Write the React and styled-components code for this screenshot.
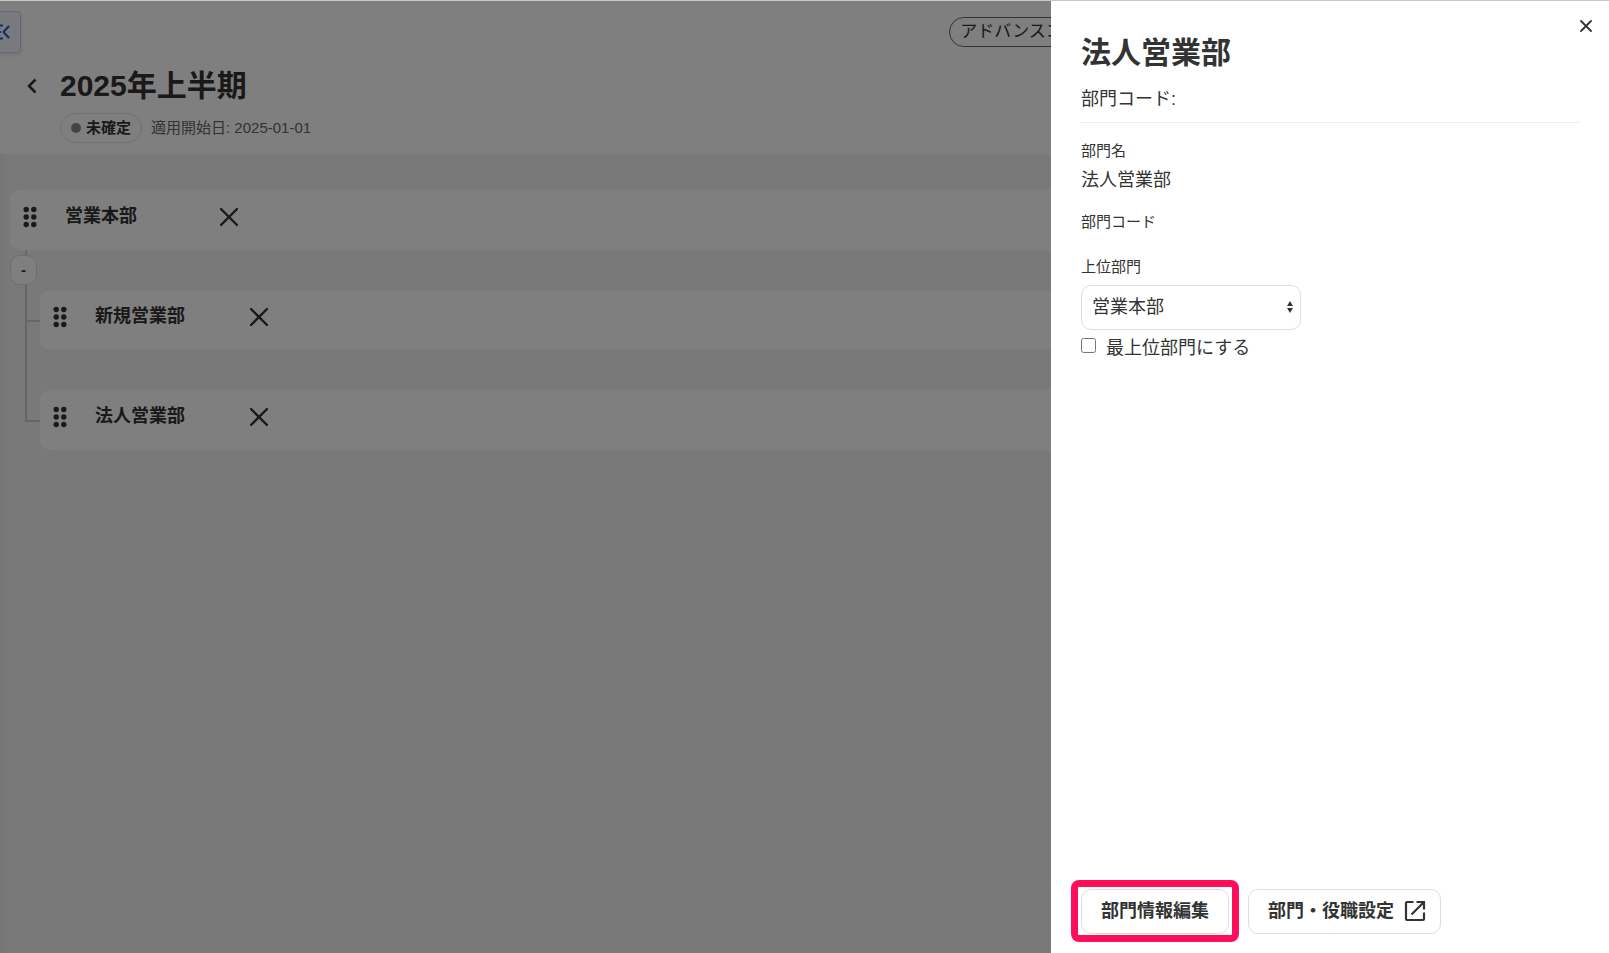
import React, { useState } from 'react';
import styled, { createGlobalStyle } from 'styled-components';

const App = () => {
  const [top, setTop] = useState(false);

  return (
    <>
      <GlobalStyle />
      <Page>
        <Header>
          <TopBar>
            <MenuTab type="button" aria-label="メニュー">
              <MenuIcon />
            </MenuTab>
            <Plan>アドバンスコース</Plan>
          </TopBar>
          <Heading>
            <BackButton type="button" aria-label="戻る">
              <BackIcon />
            </BackButton>
            <div>
              <PageTitle>2025年上半期</PageTitle>
              <Meta>
                <Status>未確定</Status>
                <span>適用開始日: 2025-01-01</span>
              </Meta>
            </div>
          </Heading>
        </Header>
        <Tree>
          <Department name="営業本部" />
          <Collapse>
            <CollapseButton type="button">-</CollapseButton>
          </Collapse>
          <Children>
            {['新規営業部', '法人営業部'].map((name, i, all) => (
              <Child key={name}>
                <Rail>
                  <Branch />
                  {i < all.length - 1 && <Trunk />}
                </Rail>
                <Department name={name} />
              </Child>
            ))}
          </Children>
        </Tree>
      </Page>
      <Overlay />
      <Drawer>
        <CloseButton type="button" aria-label="閉じる">
          <CrossIcon size={12} />
        </CloseButton>
        <DrawerTitle>法人営業部</DrawerTitle>
        <DrawerCode>部門コード:</DrawerCode>
        <Fields>
          <Label as="p">部門名</Label>
          <Value>法人営業部</Value>
          <CodeLabel as="p">部門コード</CodeLabel>
          <Label htmlFor="parent">上位部門</Label>
          <SelectBox>
            <Select id="parent" defaultValue="営業本部">
              <option>営業本部</option>
            </Select>
            <SelectArrow viewBox="0 0 6 12">
              <path d="M3 0l3 5H0zM3 12L0 7h6z" fill="#333" />
            </SelectArrow>
          </SelectBox>
          <CheckLabel>
            <Check type="checkbox" checked={top} onChange={e => setTop(e.target.checked)} />
            最上位部門にする
          </CheckLabel>
        </Fields>
        <Footer>
          <Highlight>
            <Button type="button">部門情報編集</Button>
          </Highlight>
          <LinkButton type="button">
            部門・役職設定
            <ExternalIcon />
          </LinkButton>
        </Footer>
      </Drawer>
    </>
  );
};

export default App;

const Department = ({ name }) => (
  <Card>
    <GripIcon />
    <Name>{name}</Name>
    <IconButton type="button" aria-label={`${name}を削除`}>
      <CrossIcon size={18} />
    </IconButton>
  </Card>
);

const CrossIcon = ({ size }) => (
  <svg width={size} height={size} viewBox={`0 0 ${size} ${size}`}>
    <path
      d={`M1 1L${size - 1} ${size - 1}M${size - 1} 1L1 ${size - 1}`}
      stroke="#333"
      strokeWidth={size > 14 ? 2.4 : 1.8}
      strokeLinecap="round"
    />
  </svg>
);

const GripIcon = () => (
  <svg width="14" height="22" viewBox="0 0 14 22" fill="#333">
    {[3.2, 10.8].map(x => [3.5, 11, 18.5].map(y => (
      <circle key={`${x}-${y}`} cx={x} cy={y} r="2.7" />
    )))}
  </svg>
);

const BackIcon = () => (
  <svg width="10" height="16" viewBox="0 0 10 16" fill="none">
    <path d="M8.500 1.500L2 8l6.500 6.500" stroke="#333" strokeWidth="2.500" />
  </svg>
);

const MenuIcon = () => (
  <svg width="10" height="16" viewBox="0 0 10 16" fill="none" stroke="#2456c8" strokeWidth="2">
    <path d="M0 1.500h3M0 8h1M0 14.500h3M9 2L3.500 8L9 14" />
  </svg>
);

const ExternalIcon = () => (
  <svg width="22" height="22" viewBox="0 0 22 22" fill="none" stroke="#333" strokeWidth="2.200">
    <path d="M9.500 2H3a1 1 0 0 0-1 1v16a1 1 0 0 0 1 1h16a1 1 0 0 0 1-1v-6.500M12.500 2H20v7.500M20 2L7.500 14.500" />
  </svg>
);

const GlobalStyle = createGlobalStyle`
  *, *::before, *::after {
    box-sizing: border-box;
  }
  body {
    margin: 0;
    color: #333;
    font-family: "Liberation Sans", "Noto Sans CJK JP", sans-serif;
    font-size: 18px;
    line-height: 24px;
  }
  h1, h2, p, ul {
    margin: 0;
    padding: 0;
  }
  button, select {
    color: inherit;
    font: inherit;
  }
`;

const Page = styled.main`
  display: flex;
  flex-direction: column;
  min-height: 100vh;
  border-top: 1px solid #c8c8c8;
  background: #f3f3f3;
  box-shadow: inset 8px 0 8px -6px rgba(0,0,0,0.06);
`;

const Header = styled.header`
  padding: 10px 0 11px;
  background: #fff;
`;

const TopBar = styled.div`
  display: grid;
  grid-template-columns: 59% auto;
  justify-content: start;
  align-items: center;
`;

const MenuTab = styled.button`
  display: flex;
  align-items: center;
  justify-self: start;
  width: 21px;
  height: 42px;
  padding: 0;
  border: 1px solid #c3d2ee;
  border-left: 0;
  border-radius: 0 4px 4px 0;
  background: #f1f5fd;
  box-shadow: 0 2px 4px rgba(0,0,0,0.1);
`;

const Plan = styled.span`
  height: 30px;
  padding: 0 10px;
  border: 1px solid #666;
  border-radius: 15px;
  font-size: 17px;
  line-height: 28px;
`;

const Heading = styled.div`
  display: flex;
  align-items: flex-start;
  padding: 13px 0 0 26px;
`;

const IconButton = styled.button`
  display: flex;
  align-items: center;
  justify-content: center;
  padding: 0;
  border: 0;
  background: none;
`;

const BackButton = styled(IconButton)`
  width: 12px;
  height: 40px;
  margin-right: 22px;
`;

const PageTitle = styled.h1`
  font-size: 30px;
  line-height: 40px;
`;

const Meta = styled.div`
  display: flex;
  align-items: center;
  gap: 9px;
  margin-top: 7px;
  color: #666;
  font-size: 15px;
  line-height: 28px;
`;

const Status = styled.span`
  display: flex;
  align-items: center;
  gap: 5px;
  padding: 0 10px;
  border: 1px solid #e3e3e3;
  border-radius: 15px;
  color: #333;
  font-weight: bold;
  &::before {
    content: "";
    width: 10px;
    height: 10px;
    border-radius: 50%;
    background: #888;
  }
`;

const Tree = styled.section`
  padding: 36px 0 36px 10px;
`;

const Card = styled.div`
  display: flex;
  align-items: center;
  flex: 1;
  height: 60px;
  padding: 0 13px 6px;
  border-radius: 10px 0 0 10px;
  background: #fff;
`;

const Name = styled.p`
  width: 183px;
  padding: 0 0 2px 28px;
  font-weight: bold;
`;

const Collapse = styled.div`
  height: 40px;
  padding: 5px 0;
  background: linear-gradient(#ccc, #ccc) 15px 0 / 2px 100% no-repeat;
`;

const CollapseButton = styled.button`
  display: block;
  width: 27px;
  height: 30px;
  padding: 0;
  border: 1px solid #ddd;
  border-radius: 10px;
  background: #fff;
  font-size: 15px;
  font-weight: bold;
`;

const Children = styled.ul`
  padding-left: 15px;
  list-style: none;
`;

const Child = styled.li`
  display: flex;
  &:not(:last-child) > :last-child {
    margin-bottom: 40px;
  }
`;

const Rail = styled.div`
  display: flex;
  flex-direction: column;
  width: 15px;
`;

const Branch = styled.div`
  height: 32px;
  border-bottom: 2px solid #ccc;
  border-left: 2px solid #ccc;
`;

const Trunk = styled.div`
  flex: 1;
  border-left: 2px solid #ccc;
`;

const Overlay = styled.div`
  position: fixed;
  inset: 1px 0 0;
  background: rgba(0,0,0,0.5);
`;

const Drawer = styled.aside`
  position: fixed;
  top: 1px;
  right: 0;
  bottom: 0;
  display: flex;
  flex-direction: column;
  width: 558px;
  max-width: 100%;
  padding: 32px 29px 11px 30px;
  background: #fff;
`;

const CloseButton = styled(IconButton)`
  position: absolute;
  top: 15px;
  right: 13px;
  width: 20px;
  height: 20px;
`;

const DrawerTitle = styled.h2`
  font-size: 30px;
  line-height: 40px;
`;

const DrawerCode = styled.p`
  padding: 14px 0 11px;
  border-bottom: 1px solid #eee;
`;

const Fields = styled.div`
  flex: 1;
  padding-top: 16px;
`;

const Label = styled.label`
  display: block;
  font-size: 15px;
`;

const CodeLabel = styled(Label)`
  margin: 18px 0 21px;
`;

const Value = styled.p`
  margin-top: 5px;
`;

const SelectBox = styled.div`
  position: relative;
  width: 220px;
  margin-top: 6px;
`;

const Select = styled.select`
  display: block;
  appearance: none;
  width: 100%;
  height: 45px;
  padding: 0 25px 2px 10px;
  border: 1px solid #ddd;
  border-radius: 10px;
  background: #fff;
`;

const SelectArrow = styled.svg`
  position: absolute;
  top: 16px;
  right: 8px;
  width: 6px;
  height: 12px;
  pointer-events: none;
`;

const CheckLabel = styled.label`
  display: flex;
  align-items: flex-start;
  gap: 10px;
  margin-top: 6px;
`;

const Check = styled.input`
  width: 15px;
  height: 15px;
  margin: 2px 0 0;
`;

const Footer = styled.footer`
  display: flex;
  align-items: center;
  gap: 9px;
  margin-left: -10px;
`;

const Highlight = styled.div`
  padding: 2px 3px 1px;
  border: 7px solid #ff0f5b;
  border-radius: 8px;
`;

const Button = styled.button`
  display: flex;
  align-items: center;
  gap: 10px;
  height: 45px;
  padding: 0 19px 2px;
  border: 1px solid #ddd;
  border-radius: 10px;
  background: #fff;
  font-weight: bold;
`;

const LinkButton = styled(Button)`
  padding: 0 14px 0 19px;
`;
